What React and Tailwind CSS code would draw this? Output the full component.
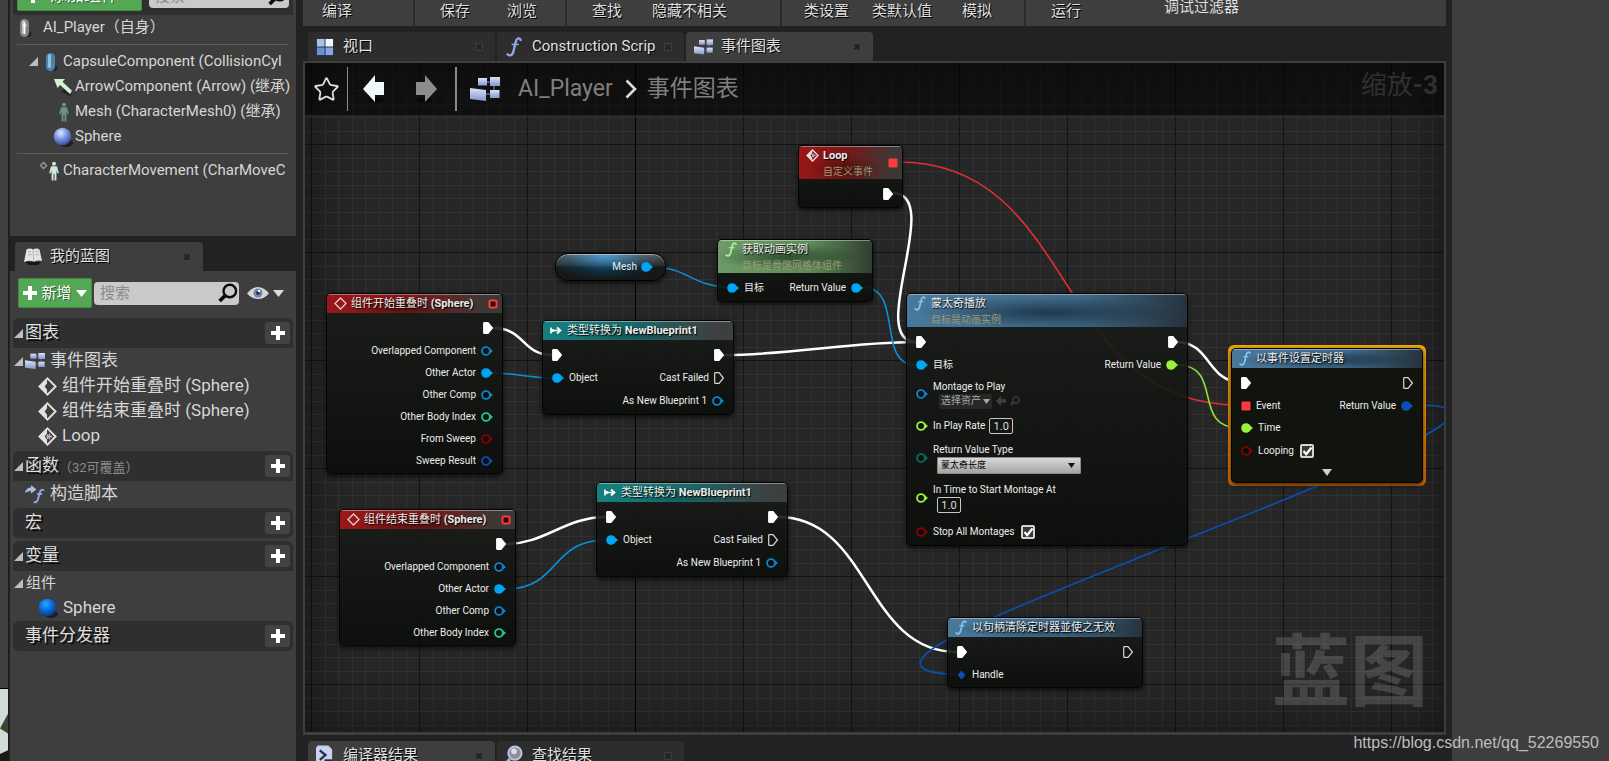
import { Star } from 'lucide-react';
import clsx from 'clsx';

// Top left corner of the visible part of the graph
const PAN = { x: 305, y: 63 };

const COLORS = {
  object: '#00a6f5',
  objectHollow: '#0a86c8',
  int: '#1fc795',
  bool: '#860000',
  struct: '#0b4fb5',
  float: '#9bf23c',
  byte: '#0b6a5e',
  delegate: '#ff3a3a',
};

/* ---------- Icons ---------- */

const PlusIcon = ({ size = 14 }) => (
  <svg width={size} height={size} viewBox="0 0 14 14" className="shrink-0" aria-hidden="true">
    <path d="M5 0h4v5h5v4H9v5H5V9H0V5h5z" fill="#fff" />
  </svg>
);

const DownIcon = ({ width = 11, height = 7, color = '#fff' }) => (
  <svg width={width} height={height} viewBox="0 0 11 7" preserveAspectRatio="none" className="shrink-0" aria-hidden="true">
    <path d="M0 0h11L5.5 7z" fill={color} />
  </svg>
);

const ExpandIcon = () => (
  <svg width="9" height="9" viewBox="0 0 9 9" className="shrink-0" aria-hidden="true">
    <path d="M9 0v9H0z" fill="#bdbdbd" />
  </svg>
);

const CloseIcon = () => (
  <svg width="8" height="8" viewBox="0 0 8 8" className="shrink-0" aria-hidden="true">
    <rect x=".5" y=".5" width="7" height="7" fill="#303030" stroke="#474747" strokeWidth=".6" />
    <path d="M1.5 1.5l5 5M6.5 1.5l-5 5" stroke="#202020" strokeWidth="1.2" />
  </svg>
);

const SearchIcon = ({ size = 20, color = '#0a0a0a' }) => (
  <svg width={size} height={size} viewBox="0 0 20 20" className="shrink-0" aria-hidden="true">
    <circle cx="11.8" cy="8" r="6.3" fill="none" stroke={color} strokeWidth="2.4" />
    <path d="M7.4 12.4L1.6 18" stroke={color} strokeWidth="3.6" />
  </svg>
);

const GraphIcon = ({ width = 20, height = 16 }) => (
  <svg width={width} height={height} viewBox="0 0 30 24" className="shrink-0" aria-hidden="true">
    <defs>
      <linearGradient id="graphFill" x1="0" y1="0" x2="0" y2="1">
        <stop offset="0" stopColor="#dbe2f8" />
        <stop offset="1" stopColor="#8797cf" />
      </linearGradient>
    </defs>
    <path d="M13 5h8M24 8v5M16 17h5" stroke="#59669c" strokeWidth="1.5" />
    <rect x="8" y="1" width="9" height="7.5" fill="url(#graphFill)" />
    <rect x="20" y="0" width="10" height="9" fill="url(#graphFill)" />
    <path d="M0 11l16 2v11L0 22z" fill="url(#graphFill)" />
    <rect x="20" y="13" width="9.5" height="8" fill="url(#graphFill)" />
  </svg>
);

const FunctionIcon = ({ color = '#8fa5e8', size = 18 }) => (
  <svg width={size * 0.8} height={size} viewBox="0 0 16 20" className="shrink-0" aria-hidden="true">
    <path
      d="M14.600 3C13.800.600 10.800.800 9.900 4.400L7.400 14.600C6.600 18.200 3.800 19.400 1.600 17.400"
      fill="none"
      stroke={color}
      strokeWidth="2.4"
      strokeLinecap="round"
    />
    <path d="M5.6 7.4h7" stroke={color} strokeWidth="1.6" />
  </svg>
);

const EventIcon = ({ size = 19, custom, dim }) => (
  <svg width={size} height={size} viewBox="0 0 20 20" className="shrink-0" aria-hidden="true">
    <path d="M10 1.5L18.5 10 10 18.5 1.5 10z" fill="none" stroke={dim ? '#e6c9c9' : '#e2e2e2'} strokeWidth="2" />
    {!dim && <path d="M9.5 2.5v4L7 10l2.5 3.5v4L2 10z" fill="#e2e2e2" />}
    {custom && <path d="M9 10h6M12 7v6M10 7.5v5" stroke="#bbb" strokeWidth="1.4" />}
  </svg>
);

const CastIcon = () => (
  <svg width="12" height="9" viewBox="0 0 12 9" className="shrink-0" aria-hidden="true">
    <path d="M1 1.5v6M1 4.5h10M3 3v3M7 1.500l3.500 3L7 7.500" fill="none" stroke="#fff" strokeWidth="1.7" />
  </svg>
);

const PersonIcon = ({ fill = '#cfe6d8', dot }) => (
  <svg width={dot ? 20 : 14} height="20" viewBox={dot ? '-7 0 20 20' : '0 0 14 20'} className="shrink-0" aria-hidden="true">
    {dot && <path d="M-3.500 1.500L-.5 4.500l-3 3-3-3z" fill="none" stroke="#8a9a90" strokeWidth="1.5" />}
    <circle cx="7" cy="2.800" r="2" fill={fill} />
    <path d="M4 5.300h6l1.800 6.700-1.400.6L9.400 9.500V19.500H7.500V13h-1v6.500H4.600V9.500l-1 3.100-1.400-.6z" fill={fill} />
  </svg>
);

const CapsuleIcon = ({ white }) => (
  <svg width="14" height="20" viewBox="0 0 14 20" className="shrink-0" aria-hidden="true">
    <ellipse cx="9" cy="16" rx="4.5" ry="3" fill="#222" />
    <rect x="2" y="1" width="9" height="18" rx="4.5" fill={white ? '#858585' : '#4b83ac'} />
    <rect x="4" y="2" width="3" height="14" rx="1.5" fill={white ? '#bdbdbd' : '#8fc0e2'} />
    {white && <path d="M6.500 4v12M4.800 7.500h3.400" stroke="#fff" strokeWidth="1.800" />}
  </svg>
);

const ArrowCompIcon = () => (
  <svg width="20" height="20" viewBox="0 0 20 20" className="shrink-0" aria-hidden="true">
    <path d="M8 14l8 5 3-2-7-5z" fill="#222" />
    <path d="M1 2h11L9.5 4.8l9.500 9-2 3.200-10-9L4.500 11z" fill="#d5f0d2" />
  </svg>
);

const BallIcon = ({ vivid }) => (
  <svg width="20" height="20" viewBox="0 0 20 20" className="shrink-0" aria-hidden="true">
    <defs>
      <radialGradient id={vivid ? 'ballVivid' : 'ball'} cx=".4" cy=".3" r=".7">
        <stop offset="0" stopColor={vivid ? '#2aa4ff' : '#dfe8ff'} />
        <stop offset=".5" stopColor={vivid ? '#0a6fe0' : '#7c96e6'} />
        <stop offset="1" stopColor={vivid ? '#063a86' : '#3a4f9c'} />
      </radialGradient>
    </defs>
    <ellipse cx="13" cy="16" rx="7" ry="4" fill="#1c1f24" />
    <circle cx="9.5" cy="9.5" r="8.8" fill={vivid ? 'url(#ballVivid)' : 'url(#ball)'} />
  </svg>
);

const BookIcon = () => (
  <svg width="20" height="20" viewBox="0 0 20 20" className="shrink-0" aria-hidden="true">
    <path d="M2 15h16l-3 3H6z" fill="#151515" />
    <path d="M3.5 2.5Q7 .5 10 2.500q3.500-2 6.500 0L19 14q-4-1.500-8 .8Q7 12.800 1 15z" fill="#e4e4e4" />
    <path d="M10 2.5l.8 12M5 5l3-.5M5 8l3.500-.5M12.500 4.500l3 .5M12.800 7.500l3.200.5" stroke="#a5a5a5" strokeWidth=".8" />
  </svg>
);

const ViewportIcon = () => (
  <svg width="18" height="18" viewBox="0 0 19 19" className="shrink-0" aria-hidden="true">
    <rect width="19" height="19" fill="#22304a" />
    <rect x="1" y="1" width="8" height="8" fill="#a9c4e2" />
    <rect x="10" y="1" width="8" height="8" fill="#f2f7fb" />
    <rect x="1" y="10" width="8" height="8" fill="#6b8fd0" />
    <rect x="10" y="10" width="8" height="8" fill="#86a6dc" />
  </svg>
);

const ConstructIcon = () => (
  <svg width="20" height="20" viewBox="0 0 20 20" className="shrink-0" aria-hidden="true">
    <path d="M0 9q1-5.500 6-5.500V1l5.500 4.500L6 9.500V7Q3 7 0 9z" fill="#a9b9ea" />
    <path d="M19 6.500q-3-2-4 1.500l-2.300 8q-1 3-4 2M12 10h5" fill="none" stroke="#8fa5e8" strokeWidth="2" />
  </svg>
);

const CompilerIcon = () => (
  <svg width="18" height="21" viewBox="0 0 19 21" className="shrink-0" aria-hidden="true">
    <path d="M2 0h11l4 4v17H0V2z" fill="#c6d4f2" />
    <path d="M4 5l6 5-6 5" fill="none" stroke="#22304a" strokeWidth="2.4" />
    <path d="M9 16h8" stroke="#22304a" strokeWidth="3" />
  </svg>
);

const FindIcon = () => (
  <svg width="18" height="21" viewBox="0 0 19 21" className="shrink-0" aria-hidden="true">
    <circle cx="10.5" cy="8" r="7" fill="#8d9099" stroke="#b9c6ec" strokeWidth="2" />
    <circle cx="9.5" cy="6" r="3" fill="#dcdde0" />
    <path d="M5 14l-4 6" stroke="#a6b4e6" strokeWidth="3.5" />
  </svg>
);

const NavArrow = ({ dim, flip }) => (
  <svg width="22" height="28" viewBox="0 0 22 28" className={clsx('shrink-0', flip && '-scale-x-100')} aria-hidden="true">
    <ellipse cx="13" cy="25" rx="8" ry="2" fill="#060606" />
    <path d="M0 14L12 0v7h9v13h-9v7z" fill={dim ? '#8c8c8c' : '#eef9fb'} />
  </svg>
);

/* ---------- Side panels ---------- */

const TreeRow = ({ icon, className, children }) => (
  <div className={clsx('flex h-[25px] items-center overflow-hidden whitespace-nowrap text-[15px] text-[#d6d6d6]', className)}>
    {icon}
    <span>{children}</span>
  </div>
);

const Divider = () => <hr className="mx-1 my-1 border-0 border-t border-[#5a5a5a]" />;

const SearchBox = ({ className, label }) => (
  <div className={clsx('flex h-[23px] min-w-0 items-center rounded-sm bg-[#c9c9c9] pl-1.5 pr-px', className)}>
    <input
      type="text"
      aria-label={label}
      placeholder="搜索"
      className="min-w-0 flex-1 bg-transparent text-[15px] leading-5 text-[#222] outline-none placeholder:text-[#8b8b8b]"
    />
    <SearchIcon />
  </div>
);

const GreenButton = ({ children, className }) => (
  <button
    type="button"
    className={clsx(
      'flex h-[30px] shrink-0 items-center whitespace-nowrap rounded-[2px] border border-[#3f8f42] bg-[#54a855] text-white [text-shadow:1px_1px_0_#2c5f2d]',
      className
    )}
  >
    {children}
  </button>
);

const ComponentsPanel = () => (
  <section className="h-[259px] bg-[#3e3e3e] px-[3px]">
    <div className="flex h-[38px] items-center gap-[7px] bg-[#2f2f2f] pl-1 pr-1">
      <GreenButton className="w-[125px] gap-2.5 pl-2 text-[17px]">
        <PlusIcon />
        添加组件
        <DownIcon />
      </GreenButton>
      <SearchBox className="flex-1" label="搜索组件" />
    </div>
    <TreeRow icon={<CapsuleIcon white />} className="gap-[11px] pl-[5px]">
      AI_Player（自身）
    </TreeRow>
    <Divider />
    <TreeRow
      icon={
        <span className="flex items-center gap-1.5">
          <ExpandIcon />
          <CapsuleIcon />
        </span>
      }
      className="gap-[5px] pl-4"
    >
      CapsuleComponent (CollisionCyl
    </TreeRow>
    <TreeRow icon={<ArrowCompIcon />} className="gap-0.5 pl-10">
      ArrowComponent (Arrow) (继承)
    </TreeRow>
    <TreeRow icon={<PersonIcon fill="#70917a" />} className="gap-1 pl-11">
      Mesh (CharacterMesh0) (继承)
    </TreeRow>
    <TreeRow icon={<BallIcon />} className="gap-0.5 pl-10">
      Sphere
    </TreeRow>
    <Divider />
    <TreeRow icon={<PersonIcon dot />} className="gap-[3px] pl-[27px]">
      CharacterMovement (CharMoveC
    </TreeRow>
  </section>
);

const Category = ({ title, note, open, className }) => (
  <div className={clsx('flex h-[30px] items-center rounded-t-md bg-[#2f2f2f] pl-px pr-[3px]', !open && 'rounded-b-md', className)}>
    <span className="flex w-[11px] shrink-0 items-center">{open && <ExpandIcon />}</span>
    <h3 className="text-[17px] text-[#dedede] [text-shadow:2px_2px_0_#0c0c0c]">{title}</h3>
    {note && <span className="pt-1 text-[13px] text-[#8a8a8a]">{note}</span>}
    <button
      type="button"
      aria-label={`新增${title}`}
      className="ml-auto flex h-[22px] w-[25px] items-center justify-center rounded-[3px] bg-[#434343]"
    >
      <PlusIcon />
    </button>
  </div>
);

const ItemRow = ({ icon, children, className }) => (
  <div className={clsx('flex h-[25px] items-center gap-[5px] whitespace-nowrap pt-px text-[17px] text-[#d6d6d6]', className)}>
    {icon}
    <span>{children}</span>
  </div>
);

const BlueprintPanel = () => (
  <section className="flex min-h-0 flex-1 flex-col">
    <div className="flex bg-[#222] pl-[5px] pt-1.5">
      <div className="flex h-[29px] w-[188px] items-center rounded-t-sm bg-[#3e3e3e] pl-2 pr-3">
        <BookIcon />
        <h2 className="flex-1 pl-[7px] text-[15px] text-[#e0e0e0] [text-shadow:1px_1px_0_#000]">我的蓝图</h2>
        <CloseIcon />
      </div>
    </div>
    <div className="flex-1 bg-[#3e3e3e] px-[3px] pt-[7px]">
      <div className="mb-2.5 flex items-center pl-[5px]">
        <GreenButton className="w-[74px] justify-center gap-1 text-[15px]">
          <PlusIcon />
          新增
          <DownIcon />
        </GreenButton>
        <SearchBox className="ml-0.5 w-[145px]" label="搜索蓝图" />
        <button type="button" aria-label="查看选项" className="ml-2 flex items-center gap-1">
          <svg width="22" height="14" viewBox="0 0 22 14" aria-hidden="true">
            <path d="M0 7.500Q5 1 11 1q6 0 11 6.500-5 5.500-11 5.500T0 7.500z" fill="#d4d4d4" />
            <circle cx="11" cy="7" r="4.500" fill="#6d86ac" />
            <circle cx="11" cy="7" r="2" fill="#26344e" />
            <circle cx="12" cy="5" r="1.2" fill="#fff" />
          </svg>
          <DownIcon color="#dcdcdc" />
        </button>
      </div>
      <Category title="图表" open />
      <ItemRow
        icon={
          <span className="flex items-center gap-0.5">
            <ExpandIcon />
            <GraphIcon />
          </span>
        }
        className="pl-px"
      >
        事件图表
      </ItemRow>
      <ItemRow icon={<EventIcon />} className="pl-[25px]">组件开始重叠时 (Sphere)</ItemRow>
      <ItemRow icon={<EventIcon />} className="pl-[25px]">组件结束重叠时 (Sphere)</ItemRow>
      <ItemRow icon={<EventIcon custom />} className="pl-[25px]">Loop</ItemRow>
      <Category title="函数" note="（32可覆盖）" open className="mt-[3px]" />
      <ItemRow icon={<ConstructIcon />} className="pl-3">构造脚本</ItemRow>
      <Category title="宏" className="mt-0.5" />
      <Category title="变量" open className="mt-[3px]" />
      <div className="flex h-6 items-center gap-[3px] pl-px text-[15px] text-[#d6d6d6]">
        <ExpandIcon />
        <span>组件</span>
      </div>
      <ItemRow icon={<BallIcon vivid />} className="pl-[25px]">Sphere</ItemRow>
      <Category title="事件分发器" className="mt-px" />
    </div>
  </section>
);

/* ---------- Toolbar and tabs ---------- */

const toolbarGroups = [
  { className: 'w-[112px] pl-1', items: ['编译'] },
  { className: 'w-[152px] pl-2.5', items: ['保存', '浏览'] },
  { className: 'w-[215px] pl-2.5', items: ['查找', '隐藏不相关'] },
  { className: 'w-[244px] pl-3.5', items: ['类设置', '类默认值', '模拟'] },
];

const toolText = 'min-w-[60px] px-2 text-[15px] leading-[22px] text-[#dedede] whitespace-nowrap [text-shadow:1px_1px_0_#000]';

const Toolbar = () => (
  <div className="flex h-[26px] bg-[#3e3e3e]">
    {toolbarGroups.map((group) => (
      <div key={group.items[0]} className={clsx('flex items-start gap-[7px] border-r-2 border-[#2b2b2b]', group.className)}>
        {group.items.map((item) => (
          <button key={item} type="button" className={toolText}>
            {item}
          </button>
        ))}
      </div>
    ))}
    <div className="flex items-start pl-2.5">
      <button type="button" className={toolText}>运行</button>
      <span className="-mt-1 ml-[60px] px-2 text-[15px] leading-[22px] text-[#dedede]">调试过滤器</span>
    </div>
  </div>
);

const Tab = ({ icon, active, children }) => (
  <button
    type="button"
    className={clsx(
      'flex h-[29px] w-[187px] shrink-0 items-center gap-[9px] rounded-t-sm pl-2 pr-3 text-left',
      active ? 'bg-[#3e3e3e]' : 'bg-[#2d2d2d]'
    )}
  >
    <span className="flex w-[18px] shrink-0 justify-center">{icon}</span>
    <span className="min-w-0 flex-1 overflow-hidden whitespace-nowrap text-[15px] text-[#e0e0e0] [text-shadow:1px_1px_0_#000]">
      {children}
    </span>
    <CloseIcon />
  </button>
);

/* ---------- Graph nodes ---------- */

const Pin = ({ type = 'object', color, filled }) => {
  if (type === 'exec') {
    return (
      <svg width="10" height="12" viewBox="0 0 10 12" className="shrink-0" aria-hidden="true">
        <path
          d="M.7 1.200Q.7.700 1.200.700H5L9.400 6 5 11.300H1.200Q.7 11.300.7 10.800z"
          fill={filled ? '#fff' : 'none'}
          stroke={filled ? '#fff' : '#d8d8d8'}
          strokeWidth="1.2"
        />
      </svg>
    );
  }
  if (type === 'square' || type === 'squareHollow') {
    return (
      <svg width="10" height="10" viewBox="0 0 10 10" className="shrink-0" aria-hidden="true">
        {type === 'square' ? (
          <rect x=".5" y=".5" width="9" height="9" rx="1" fill={COLORS.delegate} />
        ) : (
          <rect x="1.5" y="1.5" width="7" height="7" rx="1" fill="#2a0505" stroke={COLORS.delegate} strokeWidth="2" />
        )}
      </svg>
    );
  }
  if (type === 'diamond') {
    return (
      <svg width="10" height="10" viewBox="0 0 10 10" className="shrink-0" aria-hidden="true">
        <path d="M4.5.5L8.500 5l-4 4.500L.5 5z" fill={color} />
      </svg>
    );
  }
  return (
    <svg width="12" height="10" viewBox="0 0 12 10" className="shrink-0" aria-hidden="true">
      <path d="M8.500 2L12 5 8.500 8z" fill={color} />
      <circle cx="5" cy="5" r={filled ? 4.8 : 3.9} fill={filled ? color : '#0a0c0a'} stroke={color} strokeWidth={filled ? 0 : 1.9} />
    </svg>
  );
};

const InPin = ({ label, children, ...pin }) => (
  <div className="flex items-center gap-[5px]">
    <Pin {...pin} />
    {label && <span>{label}</span>}
    {children}
  </div>
);

const OutPin = ({ label, ...pin }) => (
  <div className="ml-auto flex items-center gap-[5px]">
    {label && <span>{label}</span>}
    <Pin {...pin} />
  </div>
);

const Row = ({ className = 'h-[22px]', children }) => (
  <div className={clsx('flex items-center justify-between', className)}>{children}</div>
);

const headerStyles = {
  event:
    'bg-[radial-gradient(ellipse_at_45%_70%,rgba(0,0,0,0.35),transparent_45%),linear-gradient(95deg,#9a1717_0%,#7a1717_45%,#3c3837_90%)]',
  cast: 'bg-[radial-gradient(ellipse_at_45%_60%,rgba(0,0,0,0.3),transparent_50%),linear-gradient(95deg,#16807f_0%,#176a6c_45%,#3d4040_90%)]',
  pure: 'bg-[radial-gradient(ellipse_at_45%_50%,rgba(10,25,10,0.55),transparent_60%),linear-gradient(95deg,#6d9c68_0%,#5c8a59_60%,#2f3c2e_100%)]',
  func: 'bg-[radial-gradient(ellipse_at_50%_55%,rgba(8,22,36,0.6),transparent_65%),linear-gradient(95deg,#4a789a_0%,#406b8a_60%,#26323c_100%)]',
};

const GraphNode = ({ x, y, width, kind, icon, title, strong, subtitle, corner, selected, children }) => (
  <article
    className={clsx('absolute rounded-[6px]', selected && 'bg-gradient-to-b from-[#f0a80c] to-[#cf6a08] p-[3px]')}
    style={{ left: x - PAN.x, top: y - PAN.y, width }}
  >
    <div
      className={clsx(
        'overflow-hidden rounded-[5px] border border-black/80 shadow-[0_2px_5px_rgba(0,0,0,0.7)]',
        selected ? 'bg-[#11130f]' : 'bg-gradient-to-b from-[#1b1d1b]/90 to-[#0c0e0b]/90'
      )}
    >
      <header
        className={clsx(
          'flex items-start justify-between border-t border-white/40 pl-1.5 pr-1',
          subtitle ? 'h-[33px]' : 'h-[19px]',
          headerStyles[kind]
        )}
      >
        <div className="flex gap-1">
          <span className="flex h-[17px] w-3.5 items-center justify-center">{icon}</span>
          <div className="whitespace-nowrap">
            <h4 className="text-[11px] leading-[17px] text-[#ececec] [text-shadow:1px_1px_1px_#000]">
              {title} {strong && <strong>{strong}</strong>}
            </h4>
            {subtitle && <p className="text-[10px] leading-[15px] text-[#9a9a70]">{subtitle}</p>}
          </div>
        </div>
        {corner && <span className={clsx('flex items-center', subtitle ? 'h-8' : 'h-[17px]')}>{corner}</span>}
      </header>
      <div className="px-[9px] pb-px pt-[3px]">{children}</div>
    </div>
  </article>
);

const CheckBox = ({ label, id }) => (
  <span className="flex items-center gap-1.5">
    <label htmlFor={id}>{label}</label>
    <span className="relative flex">
      <input
        id={id}
        type="checkbox"
        defaultChecked
        className="peer size-3.5 appearance-none rounded-[2px] border-2 border-[#d4d4d4] bg-[#6c6c6c] checked:bg-[#3a3a3a]"
      />
      <svg width="14" height="14" viewBox="0 0 14 14" className="pointer-events-none absolute inset-0 hidden peer-checked:block" aria-hidden="true">
        <path d="M3.5 7l2.700 3.200L11.500 3.500" fill="none" stroke="#fff" strokeWidth="2.2" />
      </svg>
    </span>
  </span>
);

const valueBox =
  'h-4 w-6 rounded-[2px] border border-[#c8c8c8] bg-transparent text-center text-[11px] leading-[14px] text-[#dcdcdc] outline-none';

const OverlapNode = ({ x, y, title, full }) => (
  <GraphNode x={x} y={y} width={177} kind="event" icon={<EventIcon size={13} dim />} title={title} strong="(Sphere)" corner={<Pin type="squareHollow" />}>
    <Row className="h-6"><OutPin type="exec" filled /></Row>
    <Row><OutPin label="Overlapped Component" color={COLORS.objectHollow} /></Row>
    <Row><OutPin label="Other Actor" color={COLORS.object} filled /></Row>
    <Row><OutPin label="Other Comp" color={COLORS.objectHollow} /></Row>
    <Row><OutPin label="Other Body Index" color={COLORS.int} /></Row>
    {full && (
      <>
        <Row><OutPin label="From Sweep" color={COLORS.bool} /></Row>
        <Row><OutPin label="Sweep Result" color={COLORS.struct} /></Row>
      </>
    )}
  </GraphNode>
);

const CastNode = ({ x, y }) => (
  <GraphNode x={x} y={y} width={192} kind="cast" icon={<CastIcon />} title="类型转换为" strong="NewBlueprint1">
    <Row className="h-6">
      <InPin type="exec" filled />
      <OutPin type="exec" filled />
    </Row>
    <Row>
      <InPin label="Object" color={COLORS.object} filled />
      <OutPin label="Cast Failed" type="exec" />
    </Row>
    <Row className="h-6"><OutPin label="As New Blueprint 1" color={COLORS.objectHollow} /></Row>
  </GraphNode>
);

const MontageNode = () => (
  <GraphNode x={906} y={293} width={282} kind="func" icon={<FunctionIcon size={15} color="#7cc4f2" />} title="蒙太奇播放" subtitle="目标是动画实例">
    <Row className="h-6">
      <InPin type="exec" filled />
      <OutPin type="exec" filled />
    </Row>
    <Row>
      <InPin label="目标" color={COLORS.object} filled />
      <OutPin label="Return Value" color={COLORS.float} filled />
    </Row>
    <Row className="h-9">
      <InPin color={COLORS.objectHollow}>
        <div>
          <p className="leading-[14px]">Montage to Play</p>
          <div className="ml-1.5 flex items-center gap-1">
            <button type="button" className="flex h-[15px] items-center gap-0.5 rounded-[2px] bg-[#262826] px-0.5 text-[10px] text-[#a8a8a8]">
              选择资产
              <DownIcon width={7} height={5} color="#a8a8a8" />
            </button>
            <svg width="10" height="10" viewBox="0 0 10 10" aria-hidden="true">
              <path d="M0 5l5-5v3.300h5v3.400H5V10z" fill="#3f423f" />
            </svg>
            <SearchIcon size={10} color="#3f423f" />
          </div>
        </div>
      </InPin>
    </Row>
    <Row className="h-7">
      <InPin color={COLORS.float}>
        <label className="flex items-center gap-1">
          In Play Rate
          <input type="text" defaultValue="1.0" className={valueBox} />
        </label>
      </InPin>
    </Row>
    <Row className="h-9">
      <InPin color={COLORS.byte}>
        <div>
          <label htmlFor="return-type" className="block leading-[14px]">Return Value Type</label>
          <div className="relative ml-1 flex items-center">
            <select
              id="return-type"
              className="h-[17px] w-36 appearance-none rounded-[1px] border border-[#8a8a8a] bg-gradient-to-b from-[#d8d8d8] to-[#a4a4a4] pl-[3px] text-[9px] leading-[15px] text-black"
            >
              <option>蒙太奇长度</option>
            </select>
            <span className="pointer-events-none absolute right-1.5 flex">
              <DownIcon width={7} height={5} color="#111" />
            </span>
          </div>
        </div>
      </InPin>
    </Row>
    <Row className="h-11">
      <InPin color={COLORS.float}>
        <div>
          <label htmlFor="start-at" className="block leading-[14px]">In Time to Start Montage At</label>
          <input id="start-at" type="text" defaultValue="1.0" className={clsx('ml-1 block', valueBox)} />
        </div>
      </InPin>
    </Row>
    <Row className="h-6">
      <InPin color={COLORS.bool}>
        <CheckBox id="stop-all" label="Stop All Montages" />
      </InPin>
    </Row>
  </GraphNode>
);

const TimerNode = () => (
  <GraphNode x={1228} y={345} width={198} kind="func" icon={<FunctionIcon size={15} color="#7cc4f2" />} title="以事件设置定时器" selected>
    <Row className="h-6">
      <InPin type="exec" filled />
      <OutPin type="exec" />
    </Row>
    <Row>
      <InPin type="square" label="Event" />
      <OutPin label="Return Value" color={COLORS.struct} filled />
    </Row>
    <Row><InPin label="Time" color={COLORS.float} filled /></Row>
    <Row className="h-6">
      <InPin color={COLORS.bool}>
        <CheckBox id="looping" label="Looping" />
      </InPin>
    </Row>
    <button type="button" aria-label="展开" className="flex h-[18px] w-full items-center justify-center">
      <DownIcon width={10} color="#cfcfcf" />
    </button>
  </GraphNode>
);

const MeshNode = () => (
  <div
    className="absolute flex h-7 items-center justify-end gap-1 rounded-[13px] border border-black bg-[linear-gradient(to_bottom,rgba(255,255,255,0.28),rgba(255,255,255,0.08)_45%,transparent_50%),radial-gradient(ellipse_at_45%_10%,#1779b4,#122c3e_45%,#151817_70%)] pr-3 shadow-[0_2px_4px_rgba(0,0,0,0.7),inset_0_1px_0_rgba(255,255,255,0.45)]"
    style={{ left: 555 - PAN.x, top: 253 - PAN.y, width: 111 }}
  >
    <span>Mesh</span>
    <Pin color={COLORS.object} filled />
  </div>
);

const wires = [
  { d: 'M493 328C525 328 522 355 552 355', color: '#fff', width: 2.5 },
  { d: 'M493 373C515 373 530 378 552 378', color: '#0a8fd6' },
  { d: 'M506 544C545 544 565 517 606 517', color: '#fff', width: 2.5 },
  { d: 'M506 589C560 589 550 540 606 540', color: '#0a8fd6' },
  { d: 'M724 355C790 355 850 342 916 342', color: '#fff', width: 2.5 },
  { d: 'M778 517C870 517 865 652 957 652', color: '#fff', width: 2.5 },
  { d: 'M654 267C685 267 695 287 727 287', color: '#0a8fd6' },
  { d: 'M862 287C905 287 875 365 916 365', color: '#0a8fd6' },
  { d: 'M893 193C945 194 865 341 916 342', color: '#fff', width: 2.5 },
  { d: 'M898 162C1080 162 1050 405 1240 405', color: '#e03030' },
  { d: 'M1177 342C1210 342 1208 382 1240 382', color: '#fff', width: 2.5 },
  { d: 'M1177 365C1225 365 1190 428 1240 428', color: '#8ce038' },
  {
    d: 'M1413 405C1440 405 1470 408 1443 424C1420 441 1380 459 1317 486S1180 541 1133 560S1030 601 995 617S960 632 940 644C905 665 920 674 957 674',
    color: '#0a4fb4',
  },
];

const GRID = [14, 27, 41, 54, 68, 81, 95];

const GraphCanvas = () => (
  <div className="relative min-h-0 flex-1 overflow-hidden bg-[#262626] text-[10px] leading-[14px] text-[#ececec]">
    <svg className="absolute inset-0 h-full w-full" aria-hidden="true">
      <defs>
        <pattern id="grid" x="6" y="81" width="108" height="108" patternUnits="userSpaceOnUse">
          {GRID.map((p) => (
            <g key={p} fill="#313131">
              <rect x={p} y="0" width="1" height="108" />
              <rect x="0" y={p} width="108" height="1" />
            </g>
          ))}
          <rect width="1" height="108" fill="#131313" />
          <rect width="108" height="1" fill="#131313" />
        </pattern>
      </defs>
      <rect width="100%" height="100%" fill="url(#grid)" />
      <rect x="330" width="1" height="100%" fill="#000" />
    </svg>
    <div className="absolute inset-0 shadow-[inset_0_0_50px_rgba(0,0,0,0.5)]" />

    <p className="absolute bottom-3 right-4 text-[78px] font-bold leading-[92px] text-white/15">蓝图</p>

    <svg className="absolute inset-0 h-full w-full" aria-hidden="true">
      <g transform={`translate(${-PAN.x} ${-PAN.y})`} fill="none">
        {wires.map((wire) => (
          <path key={wire.d} d={wire.d} stroke={wire.color} strokeWidth={wire.width || 1.6} />
        ))}
      </g>
    </svg>

    <OverlapNode x={326} y={293} title="组件开始重叠时" full />
    <OverlapNode x={339} y={509} title="组件结束重叠时" />
    <CastNode x={542} y={320} />
    <CastNode x={596} y={482} />
    <MeshNode />
    <GraphNode x={717} y={239} width={156} kind="pure" icon={<FunctionIcon size={15} color="#a5f09a" />} title="获取动画实例" subtitle="目标是骨骼网格体组件">
      <Row className="h-6">
        <InPin label="目标" color={COLORS.object} filled />
        <OutPin label="Return Value" color={COLORS.object} filled />
      </Row>
    </GraphNode>
    <GraphNode x={798} y={145} width={105} kind="event" icon={<EventIcon size={13} custom />} strong="Loop" subtitle="自定义事件" corner={<Pin type="square" />}>
      <Row className="h-6"><OutPin type="exec" filled /></Row>
    </GraphNode>
    <MontageNode />
    <TimerNode />
    <GraphNode x={947} y={617} width={196} kind="func" icon={<FunctionIcon size={15} color="#7cc4f2" />} title="以句柄清除定时器並使之无效">
      <Row className="h-6">
        <InPin type="exec" filled />
        <OutPin type="exec" />
      </Row>
      <Row><InPin type="diamond" label="Handle" color={COLORS.struct} /></Row>
    </GraphNode>

    {/* Breadcrumb bar over the canvas */}
    <div className="absolute inset-x-0 top-0 flex h-[54px] items-center border-b-2 border-[#262626] bg-black/55 pl-2 pr-1.5">
      <button type="button" aria-label="收藏">
        <Star size={27} strokeWidth={1.6} color="#dedede" />
      </button>
      <span className="ml-[7px] h-11 w-px bg-[#8a8a8a]" />
      <button type="button" aria-label="后退" className="ml-[15px]">
        <NavArrow />
      </button>
      <button type="button" aria-label="前进" className="ml-[30px]">
        <NavArrow dim flip />
      </button>
      <span className="ml-[18px] h-11 w-0.5 bg-[#8a8a8a]" />
      <span className="ml-[13px]">
        <GraphIcon width={30} height={24} />
      </span>
      <nav className="ml-[18px] flex items-center text-[23px] leading-8 text-[#7f7f7f]">
        <span>AI_Player</span>
        <svg width="12" height="20" viewBox="0 0 12 20" className="ml-3 mr-2.5" aria-hidden="true">
          <path d="M1.500 1.500L10 10l-8.500 8.500" fill="none" stroke="#dcdcdc" strokeWidth="2.600" />
        </svg>
        <span>事件图表</span>
      </nav>
      <span className="ml-auto self-start pt-1.5 text-[26px] leading-8 text-[#303030]">
        缩放<strong>-3</strong>
      </span>
    </div>
  </div>
);

export default function App() {
  return (
    <div className="relative flex h-screen overflow-hidden bg-[#222] font-['Roboto','Noto_Sans_CJK_SC',sans-serif]">
      {/* Edge of the window behind */}
      <div className="flex w-[10px] shrink-0 flex-col border-r-2 border-[#1e1e1e] bg-[#413f41]">
        <svg className="mt-auto h-[73px] w-full border-t border-black" viewBox="0 0 8 73" preserveAspectRatio="none" aria-hidden="true">
          <rect width="8" height="73" fill="#cfdad9" />
          <path d="M8 25v20L0 40z" fill="#37482c" />
          <path d="M8 62v11H0v-7z" fill="#161d12" />
        </svg>
      </div>

      <aside className="-mt-[23px] flex w-[286px] shrink-0 flex-col">
        <ComponentsPanel />
        <BlueprintPanel />
      </aside>

      <main className="ml-[7px] mr-1.5 flex min-w-0 flex-1 flex-col">
        <Toolbar />
        <div className="flex gap-0.5 pl-[5px] pt-1.5">
          <Tab icon={<ViewportIcon />}>视口</Tab>
          <Tab icon={<FunctionIcon size={20} />}>Construction Script</Tab>
          <Tab icon={<GraphIcon width={19} />} active>事件图表</Tab>
        </div>
        <div className="flex min-h-0 flex-1 border-x-2 border-b-[3px] border-t-2 border-[#3e3e3e]">
          <GraphCanvas />
        </div>
        <div className="flex h-[26px] gap-0.5 overflow-hidden pl-[5px] pt-1.5">
          <Tab icon={<CompilerIcon />} active>编译器结果</Tab>
          <Tab icon={<FindIcon />}>查找结果</Tab>
        </div>
      </main>

      <div className="w-[157px] shrink-0 bg-[#3e3e3e]" />

      <p className="absolute bottom-2 right-2.5 font-['Liberation_Sans',sans-serif] text-[16px] leading-5 text-[#bdbdbd]">
        https://blog.csdn.net/qq_52269550
      </p>
    </div>
  );
}
